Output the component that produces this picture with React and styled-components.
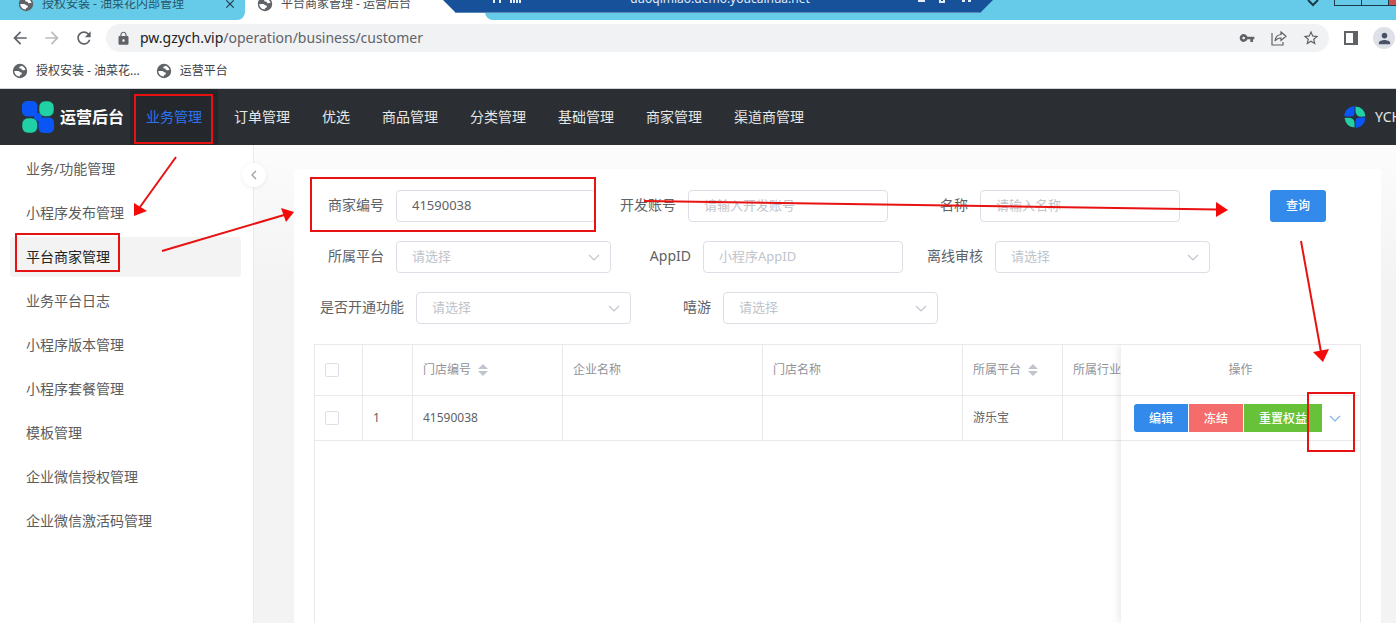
import styled, { createGlobalStyle } from "styled-components";
import {
  MdArrowBack,
  MdArrowForward,
  MdClose,
  MdLock,
  MdPerson,
  MdRefresh,
  MdStarBorder,
  MdVpnKey,
} from "react-icons/md";

const sans = `"Noto Sans", "Noto Sans CJK SC", sans-serif`;

const GlobalStyle = createGlobalStyle`
  * {
    box-sizing: border-box;
  }

  body {
    margin: 0;
    overflow: hidden;
    background: #fff;
    color: #606266;
    font: 14px/20px ${sans};
  }

  button,
  input,
  select {
    margin: 0;
    font-family: inherit;
  }

  svg {
    flex: none;
  }
`;

const Page = styled.div`
  position: relative;
  display: flex;
  flex-direction: column;
  height: 100vh;
  overflow: hidden;
`;

/* browser chrome */

const TabStrip = styled.div`
  flex: none;
  display: flex;
  align-items: flex-end;
  height: 20px;
  overflow: hidden;
  font-size: 12px;
  color: #1f3a47;
`;

const Tab = styled.div`
  flex: none;
  display: flex;
  align-items: center;
  gap: 8px;
  width: ${(p) => (p.$active ? 240 : 245)}px;
  height: 32px;
  padding: 0 8px 0 ${(p) => (p.$active ? 12 : 18)}px;
  border-bottom-right-radius: ${(p) => (p.$active ? 0 : 8)}px;
  background: ${(p) => (p.$active ? "#fff" : "#66cbe9")};
  color: ${(p) => (p.$active ? "#4a4d51" : "#24566b")};
`;

const TabTitle = styled.span`
  flex: 1;
  white-space: nowrap;
`;

const IconButton = styled.button`
  flex: none;
  display: flex;
  align-items: center;
  justify-content: center;
  width: ${(p) => p.$size || 20}px;
  height: ${(p) => p.$size || 20}px;
  padding: 0;
  border: 0;
  background: none;
  color: ${(p) => p.$color || "#5f6368"};
`;

const TabFill = styled.div`
  flex: 1;
  display: flex;
  align-items: flex-start;
  justify-content: flex-end;
  gap: 14px;
  height: 20px;
  border-bottom-left-radius: 8px;
  background: #66cbe9;
`;

const WindowButtons = styled.div`
  display: flex;
  height: 6px;
  border: solid #1c3a4a;
  border-width: 0 0 1px 1px;
`;

const WindowButton = styled.button`
  width: ${(p) => (p.$close ? 7 : 27)}px;
  padding: 0;
  border: 0;
  border-right: ${(p) => (p.$close ? 0 : 1)}px solid #1c3a4a;
  background: ${(p) => (p.$close ? "#c9504c" : "transparent")};
`;

const RemoteBar = styled.div`
  position: absolute;
  top: 0;
  left: 443px;
  width: 550px;
  height: 13px;
  display: flex;
  align-items: flex-end;
  overflow: hidden;
  clip-path: polygon(0 0, 100% 0, calc(100% - 13px) 100%, 13px 100%);
  border-bottom: 1px solid #5c86b8;
  background: #16519a;
  color: #e4eefa;
  font-size: 12px;
`;

const RemoteInner = styled.div`
  flex: 1;
  display: flex;
  align-items: center;
  justify-content: space-between;
  height: 26px;
  padding: 0 22px 0 50px;
`;

const Toolbar = styled.div`
  flex: none;
  display: flex;
  align-items: center;
  gap: 12px;
  height: 36px;
  padding: 0 1px 0 10px;
`;

const Omnibox = styled.div`
  flex: 1;
  display: flex;
  align-items: center;
  height: 28px;
  padding: 0 8px 0 10px;
  border-radius: 14px;
  background: #f1f2f4;
`;

const Host = styled.label`
  margin-left: 9px;
  color: #202124;
`;

const PathInput = styled.input`
  flex: 1;
  min-width: 0;
  height: 20px;
  padding: 0;
  border: 0;
  outline: 0;
  background: none;
  color: #5f6368;
  font-size: 14px;
  line-height: 20px;
`;

const OmniActions = styled.div`
  display: flex;
  gap: 12px;
`;

const Avatar = styled.span`
  display: flex;
  align-items: center;
  justify-content: center;
  width: 22px;
  height: 22px;
  border-radius: 50%;
  background: #dfe1e8;
  color: #4a5268;
`;

const Bookmarks = styled.div`
  flex: none;
  display: flex;
  gap: 16px;
  height: 33px;
  padding: 0 12px;
  border-bottom: 1px solid #d3d4d6;
`;

const Bookmark = styled.a`
  display: flex;
  align-items: center;
  gap: 8px;
  height: 29px;
  color: #3c4043;
  font-size: 12px;
  text-decoration: none;
`;

/* application header */

const Header = styled.header`
  flex: none;
  display: flex;
  align-items: center;
  height: 56px;
  padding-left: 22px;
  background: #2b2f33;
  color: #e6e7e8;
`;

const Brand = styled.div`
  display: flex;
  align-items: center;
  gap: 6px;
  margin-right: 6px;
  color: #fff;
  font-size: 16px;
  font-weight: 600;
`;

const Nav = styled.nav`
  flex: 1;
  display: flex;
  height: 100%;
`;

const NavLink = styled.a`
  display: flex;
  align-items: center;
  padding: 0 16px;
  background: ${(p) => (p.$active ? "#24282c" : "transparent")};
  color: ${(p) => (p.$active ? "#2c73f0" : "#e6e7e8")};
  text-decoration: none;
`;

const User = styled.div`
  flex: none;
  display: flex;
  align-items: center;
  gap: 9px;
  width: 52px;
  overflow: hidden;
  white-space: nowrap;
`;

/* body */

const Body = styled.div`
  flex: 1;
  display: flex;
  min-height: 0;
`;

const Sidebar = styled.aside`
  position: relative;
  flex: none;
  display: flex;
  flex-direction: column;
  gap: 4px;
  width: 254px;
  padding: 4px 12px 0 10px;
  border-right: 1px solid #ececec;
`;

const SideLink = styled.a`
  flex: none;
  display: flex;
  align-items: center;
  height: 40px;
  padding: 0 16px;
  border-radius: 4px;
  background: ${(p) => (p.$active ? "#f3f3f3" : "transparent")};
  color: ${(p) => (p.$active ? "#222" : "#5c5c5c")};
  text-decoration: none;
`;

const Collapse = styled.button`
  position: absolute;
  top: 18px;
  right: -13px;
  display: flex;
  align-items: center;
  justify-content: center;
  width: 24px;
  height: 24px;
  padding: 0;
  border: 0;
  border-radius: 50%;
  background: #fff;
  box-shadow: 0 1px 4px rgba(0, 0, 0, 0.08);
`;

const Main = styled.main`
  flex: 1;
  display: flex;
  min-width: 0;
  padding: 24px 15px 0 40px;
  background: linear-gradient(#fcfcfc, #f3f3f3 140px);
`;

const Card = styled.section`
  flex: 1;
  display: flex;
  flex-direction: column;
  gap: 20px;
  min-width: 0;
  padding: 21px 20px 0;
  border-radius: 4px 4px 0 0;
  background: #fff;
`;

const Filters = styled.form`
  display: flex;
  flex-direction: column;
  gap: 19px;
  padding: 0 2px;
`;

const FilterRow = styled.div`
  display: flex;
  gap: 12px;
`;

const Field = styled.div`
  flex: none;
  display: flex;
  align-items: center;
`;

const Label = styled.label`
  width: ${(p) => (p.$wide ? 100 : 80)}px;
  padding: 0 12px 2px 0;
  text-align: right;
  white-space: nowrap;
`;

const Input = styled.input`
  width: 200px;
  height: 32px;
  padding: 0 15px 2px;
  border: 1px solid #dcdfe6;
  border-radius: 4px;
  outline: 0;
  background: #fff;
  color: #606266;
  font-size: 13px;

  &::placeholder {
    color: #c0c4cc;
    opacity: 1;
  }
`;

const SelectBox = styled.div`
  display: grid;
  align-items: center;

  > * {
    grid-area: 1 / 1;
  }

  > svg {
    justify-self: end;
    margin-right: 10px;
    pointer-events: none;
  }
`;

const Select = styled.select`
  appearance: none;
  width: 215px;
  height: 32px;
  padding: 0 32px 2px 15px;
  border: 1px solid #dcdfe6;
  border-radius: 4px;
  background: #fff;
  color: #c0c4cc;
  font-size: 13px;
`;

const SearchButton = styled.button`
  width: 56px;
  height: 32px;
  margin-left: 78px;
  padding: 0 0 2px;
  border: 0;
  border-radius: 3px;
  background: #338aea;
  color: #fff;
  font-size: 12px;
  font-weight: 500;
`;

const TableArea = styled.div`
  flex: 1;
  display: flex;
  min-height: 0;
  overflow: hidden;
  border: solid #e9e9eb;
  border-width: 1px 1px 0;
`;

const TableScroll = styled.div`
  flex: 1;
  min-width: 0;
  overflow: hidden;
`;

const FixedColumn = styled.div`
  flex: none;
  width: 239px;
  background: #fff;
  box-shadow: 0 0 10px rgba(0, 0, 0, 0.14);
`;

const Table = styled.table`
  width: ${(p) => (p.$fixed ? "100%" : "948px")};
  border-collapse: separate;
  border-spacing: 0;
  table-layout: fixed;
  font-size: 12px;
`;

const Th = styled.th`
  width: ${(p) => (p.$width ? `${p.$width}px` : "auto")};
  height: 51px;
  padding: 0 10px;
  border-right: ${(p) => (p.$last ? 0 : 1)}px solid #e9e9eb;
  border-bottom: 1px solid #e9e9eb;
  color: #909399;
  font-weight: 400;
  text-align: ${(p) => (p.$last ? "center" : "left")};
`;

const Td = styled.td`
  height: 45px;
  padding: 0 ${(p) => (p.$last ? 13 : 10)}px;
  border-right: ${(p) => (p.$last ? 0 : 1)}px solid #e9e9eb;
  border-bottom: 1px solid #e9e9eb;
`;

const HeadLabel = styled.span`
  display: flex;
  align-items: center;
  gap: 7px;
  white-space: nowrap;
`;

const Check = styled.input`
  appearance: none;
  display: block;
  width: 14px;
  height: 14px;
  margin: 0;
  border: 1px solid #dcdfe6;
  border-radius: 2px;
  background: #fff;
`;

const ButtonGroup = styled.div`
  display: flex;
  gap: 1px;
`;

const ActionButton = styled.button`
  flex: none;
  display: flex;
  align-items: center;
  height: 28px;
  padding: 0 ${(p) => (p.$plain ? 5 : 15)}px;
  border: 0;
  border-radius: ${(p) => (p.$first ? "3px 0 0 3px" : 0)};
  background: ${(p) => p.$color};
  color: #fff;
  font-size: 12px;
  font-weight: 500;
`;

const Marks = styled.svg`
  position: absolute;
  top: 0;
  left: 0;
  pointer-events: none;
`;

const Globe = () => (
  <svg width="16" height="16" viewBox="0 0 16 16">
    <circle cx="8" cy="8" r="7.2" fill="#5f6368" />
    <path
      d="M2.300 8h3.700c1.600 0 1.700 1.600 3.200 1.600 1 0 .8 1.500.2 1.900-.6.5-1.600.4-1.600 1.900C4.600 13.400 2.300 11 2.300 8zM9 2.700c-.2 1-1.800.9-1.800 2 0 .8 1.200.7 1.900.9.9.300.5 1.700 1.700 1.700 1 0 1.300-.5 2.700-.1C13.200 4.900 11.500 3.200 9 2.700z"
      fill="#fff"
    />
  </svg>
);

const Logo = () => (
  <svg width="32" height="32" viewBox="0 0 32 32">
    <path d="M12 12h8v8h-8z" fill="#0a55f5" />
    <rect width="15.500" height="15.500" rx="5" fill="#0a55f5" />
    <rect x="16.500" y="16.500" width="15.500" height="15.500" rx="5" fill="#0a55f5" />
    <rect x="17" width="15" height="15.500" rx="6" fill="#1fd1a5" stroke="#2b2f33" strokeWidth=".5" />
    <rect y="17" width="15.500" height="15" rx="6" fill="#1fd1a5" stroke="#2b2f33" strokeWidth=".5" />
  </svg>
);

const RoundLogo = () => (
  <svg width="22" height="22" viewBox="0 0 22 22">
    <path d="M10.500 0v7q0 3.500-3.500 3.500H1Q0 10.500.5 8 2.500 1 10.500 0z" fill="#0a55f5" />
    <path d="M11.500.5Q20 1 21.500 10q-1 .8-4 .8-6 0-6-6z" fill="#1fd1a5" />
    <path d="M.5 12q10-1.500 10 5v4.500Q2 21 .5 12z" fill="#1fd1a5" />
    <path d="M21.500 11.500h-6q-4 0-4 4V22q9-1 10-10.500z" fill="#0a55f5" />
  </svg>
);

const Chevron = ({ color = "#c0c4cc" }) => (
  <svg width="14" height="14" viewBox="0 0 14 14" fill="none" stroke={color} strokeWidth="1.200">
    <path d="M2 5l5 5 5-5" />
  </svg>
);

const Sorter = () => (
  <svg width="10" height="12" viewBox="0 0 10 12" fill="#c0c4cc">
    <path d="M0 5l5-5 5 5zM0 7l5 5 5-5z" />
  </svg>
);

const navItems = [
  "业务管理",
  "订单管理",
  "优选",
  "商品管理",
  "分类管理",
  "基础管理",
  "商家管理",
  "渠道商管理",
];

const sideItems = [
  "业务/功能管理",
  "小程序发布管理",
  "平台商家管理",
  "业务平台日志",
  "小程序版本管理",
  "小程序套餐管理",
  "模板管理",
  "企业微信授权管理",
  "企业微信激活码管理",
];

const columns = [
  { title: "门店编号", width: 150, sortable: true },
  { title: "企业名称", width: 200 },
  { title: "门店名称", width: 200 },
  { title: "所属平台", width: 100, sortable: true },
  { title: "所属行业", width: 200, sortable: true },
];

const TextField = ({ id, label, ...rest }) => (
  <Field>
    <Label htmlFor={id}>{label}</Label>
    <Input id={id} {...rest} />
  </Field>
);

const SelectField = ({ id, label, wide }) => (
  <Field>
    <Label htmlFor={id} $wide={wide}>
      {label}
    </Label>
    <SelectBox>
      <Select id={id}>
        <option>请选择</option>
      </Select>
      <Chevron />
    </SelectBox>
  </Field>
);

const Browser = () => (
  <>
    <TabStrip>
      <Tab>
        <Globe />
        <TabTitle>授权安装 - 油菜花内部管理</TabTitle>
        <IconButton $size={14} $color="#1f3a47" aria-label="关闭">
          <MdClose size={14} />
        </IconButton>
      </Tab>
      <Tab $active>
        <Globe />
        <TabTitle>平台商家管理 - 运营后台</TabTitle>
      </Tab>
      <TabFill>
        <svg width="14" height="7" viewBox="0 0 14 7" fill="none" stroke="#1c3a4a" strokeWidth="2">
          <path d="M2 0l5 5 5-5" />
        </svg>
        <WindowButtons>
          <WindowButton aria-label="最小化" />
          <WindowButton aria-label="最大化" />
          <WindowButton $close aria-label="关闭" />
        </WindowButtons>
      </TabFill>
    </TabStrip>
    <RemoteBar>
      <RemoteInner>
        <svg width="30" height="26" viewBox="0 0 30 26" fill="#e4eefa">
          <path d="M0 13h2v4H0zM6 13h2v4H6zM17 13h2v4h-2zM20 13h2v4h-2zM23 13h2v4h-2zM26 13h2v4h-2z" />
          <path d="M-25 13l6 6M-19 13l-6 6" stroke="#0e2f63" strokeWidth="2" />
        </svg>
        <span>duoqimiao.demo.youcaihua.net</span>
        <svg width="54" height="26" viewBox="0 0 54 26" fill="#e4eefa">
          <path d="M1 13h7v3H1zM22 12h6v5h-6zM24 12v3h2v-3zM45 13h3v3h-3zM51 13h3v3h-3z" fillRule="evenodd" />
        </svg>
      </RemoteInner>
    </RemoteBar>
    <Toolbar>
      <IconButton aria-label="后退">
        <MdArrowBack size={20} />
      </IconButton>
      <IconButton $color="#babcbe" aria-label="前进">
        <MdArrowForward size={20} />
      </IconButton>
      <IconButton aria-label="刷新">
        <MdRefresh size={20} />
      </IconButton>
      <Omnibox>
        <MdLock size={15} color="#5f6368" />
        <Host htmlFor="address">pw.gzych.vip</Host>
        <PathInput id="address" defaultValue="/operation/business/customer" />
        <OmniActions>
          <IconButton aria-label="密码">
            <MdVpnKey size={16} />
          </IconButton>
          <IconButton aria-label="分享">
            <svg width="16" height="16" viewBox="0 0 16 16" fill="none" stroke="#5f6368" strokeWidth="1.200">
              <path d="M1 3v12h11v-3M10 2l5 4.200-5 4.200V8Q6 8 4 11q.5-6 6-6.500z" />
            </svg>
          </IconButton>
          <IconButton aria-label="收藏">
            <MdStarBorder size={18} />
          </IconButton>
        </OmniActions>
      </Omnibox>
      <IconButton aria-label="侧边栏">
        <svg width="14" height="14" viewBox="0 0 14 14">
          <path d="M0 0h14v14H0zM2 2v10h7V2z" fill="#5f6368" fillRule="evenodd" />
        </svg>
      </IconButton>
      <Avatar>
        <MdPerson size={17} />
      </Avatar>
    </Toolbar>
    <Bookmarks>
      <Bookmark href="#">
        <Globe />
        授权安装 - 油菜花...
      </Bookmark>
      <Bookmark href="#">
        <Globe />
        运营平台
      </Bookmark>
    </Bookmarks>
  </>
);

const MerchantTable = () => (
  <TableArea>
    <TableScroll>
      <Table>
        <thead>
          <tr>
            <Th $width={48}>
              <Check type="checkbox" aria-label="全选" />
            </Th>
            <Th $width={50} />
            {columns.map((c) => (
              <Th key={c.title} $width={c.width}>
                <HeadLabel>
                  {c.title}
                  {c.sortable && <Sorter />}
                </HeadLabel>
              </Th>
            ))}
          </tr>
        </thead>
        <tbody>
          <tr>
            <Td>
              <Check type="checkbox" aria-label="选择" />
            </Td>
            <Td>1</Td>
            <Td>41590038</Td>
            <Td />
            <Td />
            <Td>游乐宝</Td>
            <Td />
          </tr>
        </tbody>
      </Table>
    </TableScroll>
    <FixedColumn>
      <Table $fixed>
        <thead>
          <tr>
            <Th $last>操作</Th>
          </tr>
        </thead>
        <tbody>
          <tr>
            <Td $last>
              <ButtonGroup>
                <ActionButton $first $color="#338aea">
                  编辑
                </ActionButton>
                <ActionButton $color="#f56c6c">冻结</ActionButton>
                <ActionButton $color="#67c23a">重置权益</ActionButton>
                <ActionButton $plain $color="#fff" aria-label="更多">
                  <Chevron color="#7fb4ea" />
                </ActionButton>
              </ButtonGroup>
            </Td>
          </tr>
        </tbody>
      </Table>
    </FixedColumn>
  </TableArea>
);

const App = () => (
  <Page>
    <GlobalStyle />
    <Browser />
    <Header>
      <Brand>
        <Logo />
        运营后台
      </Brand>
      <Nav>
        {navItems.map((item, i) => (
          <NavLink key={item} href="#" $active={i === 0}>
            {item}
          </NavLink>
        ))}
      </Nav>
      <User>
        <RoundLogo />
        YCH
      </User>
    </Header>
    <Body>
      <Sidebar>
        {sideItems.map((item, i) => (
          <SideLink key={item} href="#" $active={i === 2}>
            {item}
          </SideLink>
        ))}
        <Collapse aria-label="收起">
          <svg width="8" height="10" viewBox="0 0 8 10" fill="none" stroke="#999" strokeWidth="1.200">
            <path d="M6 1L2 5l4 4" />
          </svg>
        </Collapse>
      </Sidebar>
      <Main>
        <Card>
          <Filters onSubmit={(e) => e.preventDefault()}>
            <FilterRow>
              <TextField id="merchant" label="商家编号" defaultValue="41590038" />
              <TextField id="account" label="开发账号" placeholder="请输入开发账号" />
              <TextField id="name" label="名称" placeholder="请输入名称" />
              <SearchButton>查询</SearchButton>
            </FilterRow>
            <FilterRow>
              <SelectField id="platform" label="所属平台" />
              <TextField id="appid" label="AppID" placeholder="小程序AppID" />
              <SelectField id="offline" label="离线审核" />
            </FilterRow>
            <FilterRow>
              <SelectField id="feature" label="是否开通功能" wide />
              <SelectField id="xiyou" label="嘻游" />
            </FilterRow>
          </Filters>
          <MerchantTable />
        </Card>
      </Main>
    </Body>
    <Marks width="1396" height="623" viewBox="0 0 1396 623">
      <g fill="none" stroke="#e81212" strokeWidth="2">
        <rect x="135" y="95" width="77" height="48" />
        <rect x="16" y="234" width="103" height="37" />
        <rect x="311" y="178" width="284" height="53" />
        <rect x="1308" y="393" width="46" height="58" />
        <path d="M176 157L140 207M162 251L284 215M644 201L1217 209.500M1301 241L1321 352" />
      </g>
      <path
        d="M134 203L147 211 134 216zM281 208L286 222 294 212zM1216 202V217L1228 210zM1313 352L1329 349 1323 362z"
        fill="#f50a0a"
      />
    </Marks>
  </Page>
);

export default App;
